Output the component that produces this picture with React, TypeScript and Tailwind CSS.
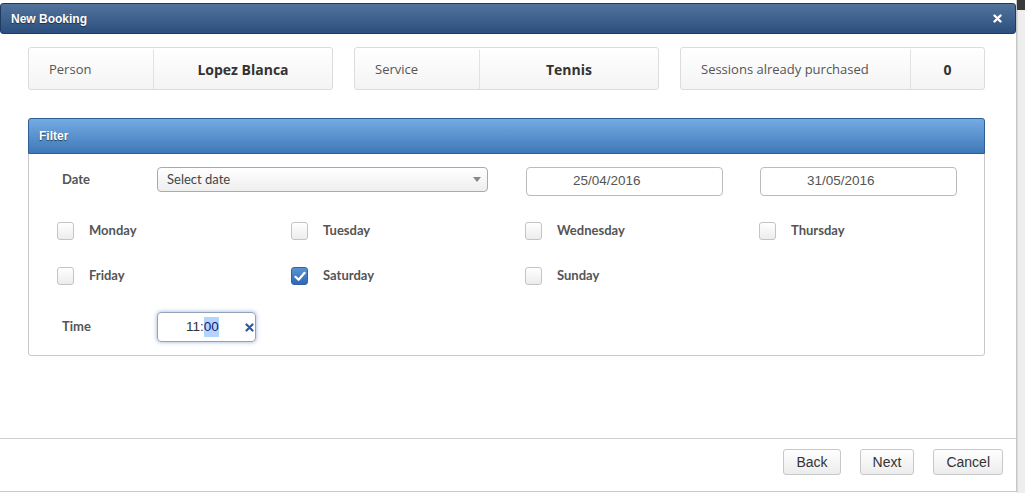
import React, { useState } from 'react'

const days = ['Monday', 'Tuesday', 'Wednesday', 'Thursday', 'Friday', 'Saturday', 'Sunday']

const InfoCard: React.FC<{ label: string; value: string; labelWidth: string }> = ({ label, value, labelWidth }) => (
  <div className="flex h-[43px] w-[305px] shrink-0 items-stretch rounded-[3px] border border-[#dcdcdc] bg-gradient-to-b from-white to-[#f4f4f4] pt-[2px]">
    <div className={`flex items-center border-r border-[#e2e2e2] pl-[20px] text-[13px] text-[#555] ${labelWidth}`}>
      {label}
    </div>
    <div className="flex flex-1 items-center justify-center text-[14px] font-bold text-[#333]">{value}</div>
  </div>
)

const Checkbox: React.FC<{ checked: boolean; onChange: () => void }> = ({ checked, onChange }) => (
  <button
    onClick={onChange}
    className={`flex h-[18px] w-[17px] items-center justify-center rounded-[3px] border ${
      checked
        ? 'border-[#2f63a6] bg-gradient-to-b from-[#5b92d6] to-[#2f68b3]'
        : 'border-[#c4c4c4] bg-gradient-to-b from-white to-[#ececec]'
    }`}
  >
    {checked && (
      <svg width="12" height="11" viewBox="0 0 12 11">
        <path d="M1.5 5.8 L4.6 8.8 L10.6 1.8" fill="none" stroke="white" strokeWidth="2.2" strokeLinecap="round" strokeLinejoin="round" />
      </svg>
    )}
  </button>
)

const App: React.FC = () => {
  const [checked, setChecked] = useState<string[]>(['Saturday'])

  const toggle = (day: string) => {
    setChecked(prev => (prev.includes(day) ? prev.filter(d => d !== day) : [...prev, day]))
  }

  const label = "font-['Lato',sans-serif] text-[13px] font-bold text-[#555]"

  return (
    <div className="flex h-[493px] w-[1025px] overflow-hidden bg-white font-['Open_Sans',sans-serif]">
      {/* Modal */}
      <div className="flex h-[492px] w-[1017px] flex-col border-r border-b border-[#c8c8c8] pt-[3px]">
        {/* Header */}
        <div className="flex h-[31px] items-center justify-between rounded-[3px] border border-[#1f3b5f] bg-gradient-to-b from-[#52739c] to-[#2b4f7e] pl-[10px] pr-[13px]">
          <span className="font-['Liberation_Sans',sans-serif] text-[12px] font-bold text-white [text-shadow:0_1px_1px_rgba(0,0,0,0.5)]">
            New Booking
          </span>
          <svg width="9" height="9" viewBox="0 0 9 9">
            <path d="M1.5 1.5 L7.5 7.5 M7.5 1.5 L1.5 7.5" stroke="white" strokeWidth="2.4" strokeLinecap="round" />
          </svg>
        </div>

        {/* Body */}
        <div className="flex h-[404px] flex-col pl-[28px] pr-[31px] pt-[13px]">
          <div className="flex gap-[21px]">
            <InfoCard label="Person" value="Lopez Blanca" labelWidth="w-[125px]" />
            <InfoCard label="Service" value="Tennis" labelWidth="w-[125px]" />
            <InfoCard label="Sessions already purchased" value="0" labelWidth="w-[230px]" />
          </div>

          {/* Filter panel */}
          <div className="mt-[28px] flex h-[238px] flex-col rounded-[3px] border border-[#c8c8c8]">
            <div className="-mx-px -mt-px flex h-[36px] items-center rounded-t-[3px] border border-[#2e5f95] bg-gradient-to-b from-[#74abe4] to-[#3e79b7] pl-[10px]">
              <span className="font-['Liberation_Sans',sans-serif] text-[12px] font-bold text-white [text-shadow:0_1px_1px_rgba(0,0,0,0.6)]">
                Filter
              </span>
            </div>

            <div className="flex flex-col pl-[28px] pt-[13px]">
              {/* Date row */}
              <div className="grid grid-cols-[234px_234px_234px_234px] items-start">
                <div className="col-span-2 flex items-center">
                  <div className={`w-[100px] pl-[5px] ${label}`}>Date</div>
                  <div className="flex h-[25px] w-[331px] items-center justify-between rounded-[4px] border border-[#aaa] bg-gradient-to-b from-white to-[#eeeeee] pl-[9px] pr-[6px]">
                    <span className="font-['Lato',sans-serif] text-[13px] text-[#444]">Select date</span>
                    <svg width="8" height="5" viewBox="0 0 8 5">
                      <path d="M0 0 L8 0 L4 5 Z" fill="#888" />
                    </svg>
                  </div>
                </div>
                <div className="ml-px flex h-[29px] w-[197px] items-center rounded-[4px] border border-[#bbb] pl-[46px] font-['Liberation_Sans',sans-serif] text-[13.5px] text-[#555]">
                  25/04/2016
                </div>
                <div className="ml-px flex h-[29px] w-[197px] items-center rounded-[4px] border border-[#bbb] pl-[46px] font-['Liberation_Sans',sans-serif] text-[13.5px] text-[#555]">
                  31/05/2016
                </div>
              </div>

              {/* Day rows */}
              <div className="mt-[26px] grid grid-cols-[234px_234px_234px_234px] gap-y-[27px]">
                {days.map(day => (
                  <div key={day} className="flex h-[18px] items-center gap-[15px]">
                    <Checkbox checked={checked.includes(day)} onChange={() => toggle(day)} />
                    <span className={label}>{day}</span>
                  </div>
                ))}
              </div>

              {/* Time row */}
              <div className="mt-[27px] flex items-center">
                <div className={`w-[100px] pl-[5px] ${label}`}>Time</div>
                <div className="relative flex h-[30px] w-[99px] items-center rounded-[4px] border border-[#8da3c0] pl-[28px] shadow-[0_0_4px_rgba(60,100,160,0.5)] font-['Liberation_Sans',sans-serif] text-[13.5px] text-[#333]">
                  <span>11:</span>
                  <span className="bg-[#b3d4fc] text-[#1a1a6e]">00</span>
                  <svg className="absolute right-[1px] top-[10px]" width="9" height="9" viewBox="0 0 9 9">
                    <path d="M1.5 1.5 L7.5 7.5 M7.5 1.5 L1.5 7.5" stroke="#2f5a94" strokeWidth="2.2" strokeLinecap="round" />
                  </svg>
                </div>
              </div>
            </div>
          </div>
        </div>

        {/* Footer */}
        <div className="flex flex-1 items-start justify-end gap-[19px] border-t border-[#d0d0d0] pr-[13px] pt-[10px]">
          {['Back', 'Next', 'Cancel'].map(b => (
            <button
              key={b}
              className="h-[26px] rounded-[3px] border border-[#c8c8c8] bg-gradient-to-b from-white to-[#ececec] px-[12px] font-['Liberation_Sans',sans-serif] text-[14px] text-[#333]"
            >
              {b}
            </button>
          ))}
        </div>
      </div>

      {/* Page behind */}
      <div className="flex flex-1 flex-col">
        <div className="h-[10px] bg-[#3a3a3a]" />
        <div className="flex-1 border-l border-[#d8d8d8] bg-[#eeeeee]" />
      </div>
    </div>
  )
}

export default App
